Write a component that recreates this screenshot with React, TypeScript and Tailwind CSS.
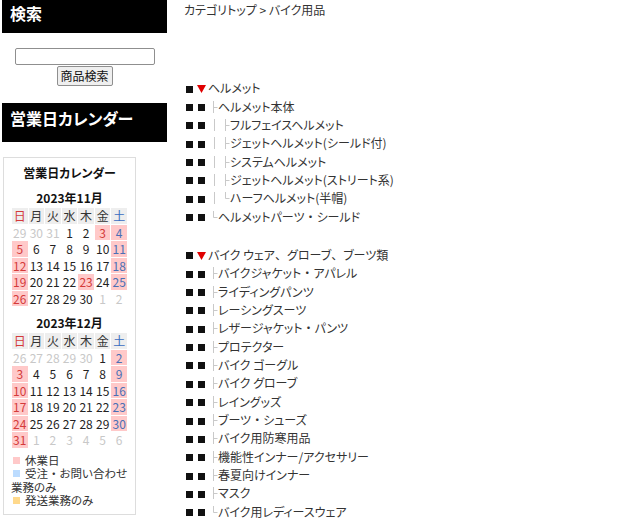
import React from "react";

type Cell = { d: number; k?: "o" | "h" | "s" | "hs" };

const FONT = "font-['Noto_Sans_CJK_JP','Noto_Sans',sans-serif] [font-feature-settings:'palt']";

const nov: Cell[][] = [
  [{ d: 29, k: "o" }, { d: 30, k: "o" }, { d: 31, k: "o" }, { d: 1 }, { d: 2 }, { d: 3, k: "h" }, { d: 4, k: "hs" }],
  [{ d: 5, k: "h" }, { d: 6 }, { d: 7 }, { d: 8 }, { d: 9 }, { d: 10 }, { d: 11, k: "hs" }],
  [{ d: 12, k: "h" }, { d: 13 }, { d: 14 }, { d: 15 }, { d: 16 }, { d: 17 }, { d: 18, k: "hs" }],
  [{ d: 19, k: "h" }, { d: 20 }, { d: 21 }, { d: 22 }, { d: 23, k: "h" }, { d: 24 }, { d: 25, k: "hs" }],
  [{ d: 26, k: "h" }, { d: 27 }, { d: 28 }, { d: 29 }, { d: 30 }, { d: 1, k: "o" }, { d: 2, k: "o" }],
];

const dec: Cell[][] = [
  [{ d: 26, k: "o" }, { d: 27, k: "o" }, { d: 28, k: "o" }, { d: 29, k: "o" }, { d: 30, k: "o" }, { d: 1 }, { d: 2, k: "hs" }],
  [{ d: 3, k: "h" }, { d: 4 }, { d: 5 }, { d: 6 }, { d: 7 }, { d: 8 }, { d: 9, k: "hs" }],
  [{ d: 10, k: "h" }, { d: 11 }, { d: 12 }, { d: 13 }, { d: 14 }, { d: 15 }, { d: 16, k: "hs" }],
  [{ d: 17, k: "h" }, { d: 18 }, { d: 19 }, { d: 20 }, { d: 21 }, { d: 22 }, { d: 23, k: "hs" }],
  [{ d: 24, k: "h" }, { d: 25 }, { d: 26 }, { d: 27 }, { d: 28 }, { d: 29 }, { d: 30, k: "hs" }],
  [{ d: 31, k: "h" }, { d: 1, k: "o" }, { d: 2, k: "o" }, { d: 3, k: "o" }, { d: 4, k: "o" }, { d: 5, k: "o" }, { d: 6, k: "o" }],
];

const week = ["日", "月", "火", "水", "木", "金", "土"];

const cellClass = (c: Cell) => {
  if (c.k === "o") return "text-[#c8c8c8]";
  if (c.k === "h") return "bg-[#ffc9c9] text-[#d43a3a]";
  if (c.k === "hs") return "bg-[#ffc9c9] text-[#4a6fb5]";
  return "text-[#222]";
};

function Month({ title, rows }: { title: string; rows: Cell[][] }) {
  return (
    <div className="mt-[9px]">
      <div className="text-center font-bold text-[12px] leading-[16px] text-[#111]">{title}</div>
      <div className="mx-auto mt-[2px] grid w-[115px] grid-cols-7 gap-px text-[12px] leading-[15.5px]">
        {week.map((w, i) => (
          <div
            key={w}
            className={
              "h-[15.5px] bg-[#eeeeee] text-center " +
              (i === 0 ? "text-[#d43a3a]" : i === 6 ? "text-[#3a6cc0]" : "text-[#333]")
            }
          >
            {w}
          </div>
        ))}
        {rows.flat().map((c, i) => (
          <div key={i} className={"h-[15.5px] text-center " + cellClass(c)}>
            {c.d}
          </div>
        ))}
      </div>
    </div>
  );
}

type Item = { t: string; lv: 1 | 2 | 3; end?: boolean };

const group1: Item[] = [
  { t: "ヘルメット", lv: 1 },
  { t: "ヘルメット本体", lv: 2 },
  { t: "フルフェイスヘルメット", lv: 3 },
  { t: "ジェットヘルメット(シールド付)", lv: 3 },
  { t: "システムヘルメット", lv: 3 },
  { t: "ジェットヘルメット(ストリート系)", lv: 3 },
  { t: "ハーフヘルメット(半帽)", lv: 3, end: true },
  { t: "ヘルメットパーツ・シールド", lv: 2, end: true },
];

const group2: Item[] = [
  { t: "バイク ウェア、グローブ、ブーツ類", lv: 1 },
  { t: "バイクジャケット・アパレル", lv: 2 },
  { t: "ライディングパンツ", lv: 2 },
  { t: "レーシングスーツ", lv: 2 },
  { t: "レザージャケット・パンツ", lv: 2 },
  { t: "プロテクター", lv: 2 },
  { t: "バイク ゴーグル", lv: 2 },
  { t: "バイク グローブ", lv: 2 },
  { t: "レイングッズ", lv: 2 },
  { t: "ブーツ・シューズ", lv: 2 },
  { t: "バイク用防寒用品", lv: 2 },
  { t: "機能性インナー/アクセサリー", lv: 2 },
  { t: "春夏向けインナー", lv: 2 },
  { t: "マスク", lv: 2 },
  { t: "バイク用レディースウェア", lv: 2, end: true },
];

// full-width punctuation keeps its full width, as in the original font
function Label({ t }: { t: string }) {
  const parts = t.split(/([、・])/);
  return (
    <span>
      {parts.map((p, i) =>
        p === "、" || p === "・" ? (
          <span key={i} className="[font-feature-settings:normal]">
            {p}
          </span>
        ) : (
          p
        )
      )}
    </span>
  );
}

function Branch({ lv, end }: { lv: 2 | 3; end?: boolean }) {
  const x = lv === 2 ? 5.5 : 17.5;
  return (
    <svg width={lv === 2 ? 10 : 22} height="18" className="shrink-0" stroke="#c9c9c9" strokeWidth="1">
      {lv === 3 && <line x1="6.5" y1="3" x2="6.5" y2="15" />}
      <line x1={x} y1="3" x2={x} y2={end ? 9.5 : 15} />
      <line x1={x} y1="9.5" x2={x + 4} y2="9.5" />
    </svg>
  );
}

function Square() {
  return (
    <span className="flex w-[12px] shrink-0 translate-y-[1px] pl-[2px]">
      <span className="h-[7px] w-[7px] bg-[#111]" />
    </span>
  );
}

function Row({ it }: { it: Item }) {
  return (
    <li className="flex h-[18.35px] items-center whitespace-nowrap">
      <Square />
      {it.lv === 1 ? (
        <span className="flex w-[12px] shrink-0 translate-y-[1px] pl-px">
          <svg width="9" height="8" viewBox="0 0 9 8">
            <path d="M0 0H9L4.5 8Z" fill="#e00000" />
          </svg>
        </span>
      ) : (
        <Square />
      )}
      {it.lv !== 1 && <Branch lv={it.lv} end={it.end} />}
      <Label t={it.t} />
    </li>
  );
}

function Legend({ color, children }: { color: string; children: React.ReactNode }) {
  return (
    <div>
      <span className={"relative -top-px ml-[2px] mr-[5px] inline-block h-[7px] w-[7px] align-middle " + color} />
      {children}
    </div>
  );
}

export default function App() {
  return (
    <div className={"flex min-h-[529px] bg-white text-[#333] " + FONT}>
      <aside className="ml-[2px] w-[165px] shrink-0">
        <h2 className="h-[33px] bg-black pl-[8px] pt-[3px] text-[16px] font-bold leading-[20px] text-white">検索</h2>
        <div className="mt-[15px] flex flex-col items-center">
          <input
            type="text"
            className="h-[17px] w-[140px] rounded-[2px] border border-[#8f8f8f] bg-white"
          />
          <button className="mt-px h-[20px] w-[56px] rounded-[2px] border border-[#8f8f8f] bg-[#efefef] text-[12px] leading-[18px] text-[#111]">
            商品検索
          </button>
        </div>
        <h2 className="mt-[17px] h-[39px] bg-black pl-[8px] pt-[5px] text-[16px] font-bold leading-[20px] text-white">
          営業日カレンダー
        </h2>
        <div className="ml-px mt-[15px] w-[133px] border border-[#dddddd] pb-[6px] pt-[7px]">
          <div className="text-center text-[12px] font-bold leading-[16px] text-[#111]">営業日カレンダー</div>
          <Month title="2023年11月" rows={nov} />
          <Month title="2023年12月" rows={dec} />
          <div className="mt-[6px] w-[126px] pl-[7px] text-[11.5px] leading-[13.5px] text-[#333]">
            <Legend color="bg-[#ffc9c9]">休業日</Legend>
            <Legend color="bg-[#bcdcff]">
              <Label t="受注・お問い合わせ業務のみ" />
            </Legend>
            <Legend color="bg-[#ffd98c]">発送業務のみ</Legend>
          </div>
        </div>
      </aside>
      <main className="ml-[17px] flex-1 text-[12px]">
        <div className="pt-px leading-[18px]">カテゴリトップ &gt; バイク用品</div>
        <ul className="mt-[60px]">
          {group1.map((it) => (
            <Row key={it.t} it={it} />
          ))}
        </ul>
        <ul className="mt-[20px]">
          {group2.map((it) => (
            <Row key={it.t} it={it} />
          ))}
        </ul>
      </main>
    </div>
  );
}
